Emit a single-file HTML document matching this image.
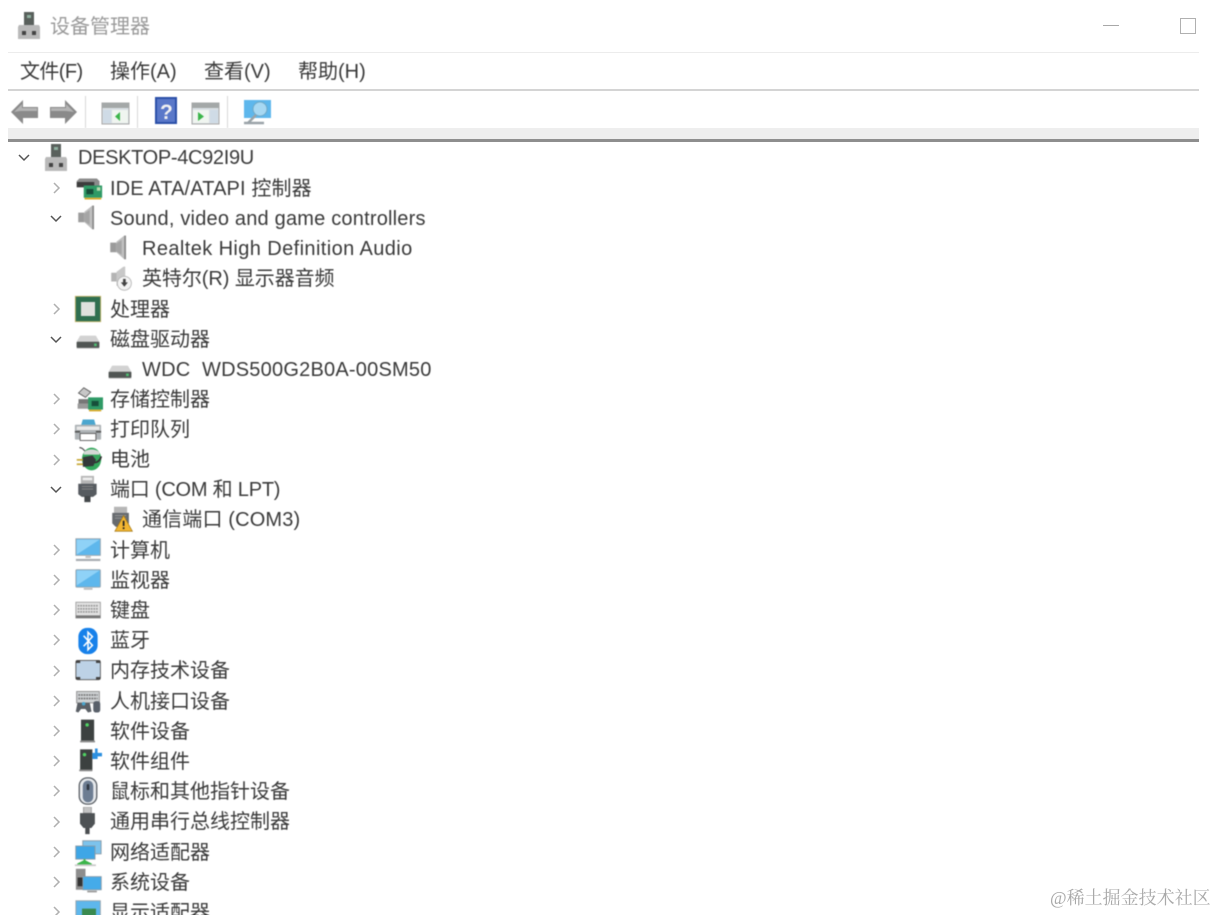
<!DOCTYPE html>
<html lang="zh-CN"><head><meta charset="utf-8"><title>设备管理器</title>
<style>
html,body{margin:0;padding:0;background:#fff;width:1216px;height:915px;overflow:hidden}
body{position:relative;font-family:"Liberation Sans","Noto Sans CJK SC",sans-serif;color:#3a3a3a}
.t{position:absolute;font-size:20px;line-height:28px;height:28px;white-space:nowrap;filter:blur(.4px)}
.i{position:absolute;width:28px;height:28px;filter:blur(.5px)}
.l{position:absolute}
</style></head><body>
<svg width="0" height="0" style="position:absolute">
<defs>
<symbol id="pc" viewBox="0 0 32 32"><rect x="11" y="2" width="10" height="15" fill="#59605c"/><rect x="14" y="5" width="4" height="3" fill="#8fb0a0"/><path d="M6 15h20l1 2v12H5V17z" fill="#b9b9b9"/><rect x="9" y="21" width="4" height="4" fill="#444"/><rect x="19" y="21" width="4" height="4" fill="#444"/></symbol>
<symbol id="ide" viewBox="0 0 32 32"><path d="M2 7l3-3h20l3 3v7H2z" fill="#8b8b8b"/><rect x="2" y="8" width="20" height="6" fill="#3c3c3c"/><rect x="10" y="12" width="21" height="14" fill="#2f9a66"/><rect x="13" y="16" width="8" height="6" fill="#174f3a"/><rect x="25" y="14" width="4" height="4" fill="#b5dcae"/><rect x="11" y="26" width="19" height="2" fill="#d8a926"/></symbol>
<symbol id="spk" viewBox="0 0 32 32"><rect x="6" y="11" width="7" height="11" fill="#9b9b9b"/><path d="M13 10l9-7h2v27h-2l-9-8z" fill="#c0c0c0"/><path d="M22 3h2v27h-2z" fill="#8a8a8a"/><path d="M13 12l6-4v17l-6-4z" fill="#a5a5a5"/></symbol>
<symbol id="spkd" viewBox="0 0 32 32"><rect x="6" y="10" width="6" height="10" fill="#b4b4b4"/><path d="M12 9l8-6h2v22H12z" fill="#c8c8c8"/><circle cx="21" cy="22" r="8" fill="#f4f4f4" stroke="#b5b5b5"/><path d="M19.500 17h3v4h2.500l-4 5-4-5h2.500z" fill="#444"/></symbol>
<symbol id="cpu" viewBox="0 0 32 32"><rect x="1" y="1" width="30" height="30" fill="#c9b66b"/><rect x="2" y="2" width="28" height="28" fill="#2f6f50"/><rect x="8" y="8" width="16" height="16" fill="#dfe1de"/></symbol>
<symbol id="hdd" viewBox="0 0 32 32"><path d="M7 11h18l4 7v8H3v-8z" fill="#d2d2d2"/><rect x="3" y="18" width="26" height="7" rx="1" fill="#505553"/><rect x="23" y="20" width="3" height="3" fill="#4fbf73"/></symbol>
<symbol id="sto" viewBox="0 0 32 32"><path d="M10 2l8 5-6 6-8-5z" fill="#c7c7c7" stroke="#555"/><rect x="4" y="15" width="12" height="5" fill="#777"/><rect x="3" y="20" width="18" height="6" fill="#9a9a9a"/><rect x="15" y="13" width="17" height="14" fill="#2f9a66"/><rect x="19" y="17" width="8" height="6" fill="#174f3a"/><rect x="16" y="27" width="14" height="2" fill="#d8a926"/></symbol>
<symbol id="prn" viewBox="0 0 32 32"><path d="M10 4h13l2 7H8z" fill="#4aa6cf"/><rect x="1" y="10" width="30" height="17" rx="1" fill="#aeb3b6"/><rect x="3" y="12" width="26" height="4" fill="#e8e8e8"/><rect x="7" y="20" width="18" height="8" fill="#fff" stroke="#555"/><rect x="1" y="17" width="6" height="2" fill="#555"/><rect x="25" y="17" width="6" height="2" fill="#555"/></symbol>
<symbol id="bat" viewBox="0 0 32 32"><path d="M5 3c6 0 4 5 9 4" fill="none" stroke="#555" stroke-width="1.500"/><ellipse cx="19" cy="16" rx="11" ry="13" fill="#34a85c"/><path d="M10 8q9-6 18 0v3H10z" fill="#d4d8d5"/><path d="M2 17h9M2 22h9" stroke="#c8a93a" stroke-width="2"/><path d="M9 14l11-2 4 5-3 7-12 1z" fill="#33393a"/><path d="M22 20q6 0 8-7" stroke="#333" stroke-width="2" fill="none"/></symbol>
<symbol id="port" viewBox="0 0 32 32"><rect x="9" y="1" width="15" height="10" fill="#b6b6b6"/><rect x="11" y="3" width="11" height="3" fill="#eee"/><path d="M6 10h21v12l-4 3H10l-4-3z" fill="#565b60"/><rect x="13" y="24" width="7" height="7" fill="#43474a"/><path d="M10 13h13M10 16h13" stroke="#888"/></symbol>
<symbol id="portw" viewBox="0 0 32 32"><rect x="8" y="2" width="15" height="8" fill="#b6b6b6"/><path d="M6 9h19v12l-4 4H10l-4-4z" fill="#666a6e"/><path d="M9 12h13M9 15h13" stroke="#999"/><path d="M19 12l10 18H9z" fill="#f2b632" stroke="#a17412" stroke-width=".8"/><rect x="18" y="18" width="2" height="6" fill="#222"/><rect x="18" y="25.500" width="2" height="2" fill="#222"/></symbol>
<symbol id="comp" viewBox="0 0 32 32"><rect x="1" y="2" width="28" height="19" fill="#5eb7ec" stroke="#9aa3aa"/><path d="M2 3h26L2 20z" fill="#8fd2f7"/><rect x="12" y="21" width="6" height="3" fill="#c3c3c3"/><rect x="1" y="25" width="28" height="2.500" fill="#a7adb1"/></symbol>
<symbol id="mon" viewBox="0 0 32 32"><rect x="1" y="3" width="28" height="20" rx="1" fill="#5eb7ec" stroke="#9aa3aa"/><path d="M2 4h26L2 21z" fill="#8fd2f7"/><rect x="10" y="24" width="10" height="2" fill="#bbb"/></symbol>
<symbol id="kbd" viewBox="0 0 32 32"><rect x="1" y="6" width="28" height="18" fill="#e3e3e3" stroke="#9b9b9b"/><path d="M3 10h24M3 13.500h24M3 17h24" stroke="#999" stroke-dasharray="2 1" stroke-width="2"/><rect x="1" y="21" width="28" height="3" fill="#777"/></symbol>
<symbol id="bt" viewBox="0 0 32 32"><rect x="5" y="1" width="22" height="30" rx="10" fill="#1781ea"/><path d="M11 10l10 11-5 5V6l5 5-10 11" fill="none" stroke="#fff" stroke-width="1.800"/></symbol>
<symbol id="mem" viewBox="0 0 32 32"><rect x="1" y="5" width="28" height="22" rx="2" fill="#bdd2e6" stroke="#555"/><path d="M1 5h5v3H1zM24 5h5v3h-5zM1 24h5v3H1zM24 24h5v3h-5z" fill="#444"/></symbol>
<symbol id="hid" viewBox="0 0 32 32"><rect x="3" y="4" width="26" height="13" fill="#cfd2d4" stroke="#8a8a8a"/><path d="M5 8h22M5 12h22" stroke="#777" stroke-dasharray="2 1" stroke-width="2"/><path d="M2 27l2-10h14l2 10-4 1-3-4H8l-3 4z" fill="#5b6066"/><rect x="22" y="15" width="8" height="13" rx="3" fill="#59606a"/><circle cx="11" cy="18" r="2" fill="#4aa6cf"/></symbol>
<symbol id="soft" viewBox="0 0 32 32"><rect x="8" y="3" width="15" height="24" fill="#3c4140"/><circle cx="15" cy="9" r="2" fill="#4fd262"/><rect x="7" y="27" width="17" height="2" fill="#888"/></symbol>
<symbol id="softc" viewBox="0 0 32 32"><rect x="7" y="5" width="14" height="24" fill="#3c4140"/><circle cx="12" cy="11" r="2" fill="#4fd262"/><rect x="6" y="28" width="15" height="2" fill="#888"/><path d="M21 9h3V4h3v5h5v4h-5v3h-6z" fill="#2b8fe0"/></symbol>
<symbol id="mouse" viewBox="0 0 32 32"><rect x="6" y="1" width="20" height="30" rx="9" fill="#e6e9ec" stroke="#5b6066" stroke-width="1.500"/><rect x="10" y="4" width="12" height="25" rx="6" fill="#6d7d92"/><rect x="14.500" y="8" width="3" height="7" rx="1.500" fill="#2e3640"/></symbol>
<symbol id="usb" viewBox="0 0 32 32"><rect x="12" y="0" width="9" height="7" fill="#c4c4c4" stroke="#999"/><path d="M8 7h17v12l-4 5h-9l-4-5z" fill="#4e5255"/><rect x="14" y="24" width="5" height="7" fill="#4a4d50"/></symbol>
<symbol id="net" viewBox="0 0 32 32"><rect x="10" y="2" width="21" height="15" fill="#7cc3ec" stroke="#8a9aa6"/><rect x="2" y="8" width="22" height="15" fill="#3ea6e6" stroke="#8a9aa6"/><path d="M12 23v4M4 29l8-4 8 4z" stroke="#3bb54a" fill="#3bb54a" stroke-width="2"/><rect x="1" y="29" width="24" height="2" fill="#c9c9c9"/></symbol>
<symbol id="sys" viewBox="0 0 32 32"><rect x="1" y="2" width="11" height="24" fill="#8d8d8d"/><rect x="3" y="12" width="7" height="10" fill="#333"/><rect x="9" y="11" width="21" height="15" fill="#45abe9" stroke="#8a9aa6"/><rect x="14" y="27" width="11" height="2" fill="#999"/></symbol>
<symbol id="disp" viewBox="0 0 32 32"><rect x="1" y="2" width="28" height="22" fill="#5eb7ec" stroke="#9aa3aa"/><rect x="8" y="11" width="16" height="8" fill="#3a8a4f"/></symbol>
</defs></svg>

<!-- title bar -->
<svg class="i" style="left:13px;top:10px;width:32px;height:32px"><use href="#pc"/></svg>
<div class="t" style="left:50px;top:13px;color:#9a9a9a">设备管理器</div>
<div class="l" style="left:1103px;top:25px;width:16px;height:1px;background:#a8a8a8"></div>
<div class="l" style="left:1180px;top:18px;width:14px;height:14px;border:1.500px solid #b0b0b0"></div>
<div class="l" style="left:8px;top:52px;width:1191px;height:1px;background:#ececec"></div>

<!-- menu -->
<div class="t" style="left:20px;top:58px;letter-spacing:-.6px">文件(F)</div>
<div class="t" style="left:110px;top:58px">操作(A)</div>
<div class="t" style="left:204px;top:58px">查看(V)</div>
<div class="t" style="left:298px;top:58px">帮助(H)</div>
<div class="l" style="left:8px;top:88.500px;width:1191px;height:2.500px;background:#d4d4d4"></div>

<!-- toolbar -->
<svg class="l" style="left:8px;top:96px;filter:blur(.6px)" width="270" height="32" viewBox="0 0 270 32">
<path d="M3 16L15 4v7h15v11H15v6z" fill="#8a8a8a"/><path d="M6 16l8-8v4h15v3H12z" fill="#b4b4b4"/>
<path d="M69 16L57 4v7H42v11h15v6z" fill="#8a8a8a"/><path d="M66 16l-8-8v4H43v3h15z" fill="#b4b4b4"/>
<rect x="77" y="-2" width="1" height="34" fill="#d8d8d8"/>
<rect x="94" y="7" width="27" height="21" fill="#d9dfe4" stroke="#a8a8a8"/><rect x="94" y="7" width="27" height="5" fill="#a4a8a8"/><rect x="95" y="14" width="8" height="13" fill="#cfdbe6"/><rect x="104" y="14" width="16" height="13" fill="#f0f5f0"/><path d="M112 16v9l-5-4.500z" fill="#3bb54a"/>
<rect x="129" y="-2" width="1" height="34" fill="#d8d8d8"/>
<rect x="147" y="1" width="22" height="27" fill="#2b4fa8"/><rect x="149" y="3" width="18" height="23" fill="#5a78c9"/><text x="152" y="23" font-family="Liberation Sans,sans-serif" font-size="21" font-weight="bold" fill="#f1f1f1">?</text>
<rect x="184" y="7" width="27" height="21" fill="#d9dfe4" stroke="#a8a8a8"/><rect x="184" y="7" width="27" height="5" fill="#a4a8a8"/><rect x="185" y="14" width="16" height="13" fill="#f0f5f0"/><rect x="202" y="14" width="8" height="13" fill="#cfdbe6"/><path d="M190 16v9l6-4.500z" fill="#3bb54a"/>
<rect x="219" y="-2" width="1" height="34" fill="#d8d8d8"/>
<rect x="236" y="4" width="27" height="18" fill="#5eb7ec"/><circle cx="252" cy="13" r="7" fill="#a7d8f2" stroke="#6fa9c7"/><path d="M248 19l-8 8M236 27h20" stroke="#9aa3a8" stroke-width="2.500"/>
</svg>
<div class="l" style="left:8px;top:128px;width:1191px;height:11px;background:#eeeeee"></div>
<div class="l" style="left:8px;top:139px;width:1191px;height:3px;background:#8e8e8e"></div>

<!-- tree: chevrons -->
<svg class="l" style="left:0;top:0" width="70" height="915" fill="none" stroke-width="1.500">
<g stroke="#555"><path d="M19 155l5 5 5-5"/><path d="M51 216l5 5 5-5"/><path d="M51 337l5 5 5-5"/><path d="M51 487l5 5 5-5"/></g>
<g stroke="#b0b0b0">
<path d="M54 183l5 5-5 5"/><path d="M54 304l5 5-5 5"/><path d="M54 394l5 5-5 5"/><path d="M54 424l5 5-5 5"/><path d="M54 455l5 5-5 5"/><path d="M54 545l5 5-5 5"/><path d="M54 575l5 5-5 5"/><path d="M54 605l5 5-5 5"/><path d="M54 635l5 5-5 5"/><path d="M54 666l5 5-5 5"/><path d="M54 696l5 5-5 5"/><path d="M54 726l5 5-5 5"/><path d="M54 756l5 5-5 5"/><path d="M54 786l5 5-5 5"/><path d="M54 817l5 5-5 5"/><path d="M54 847l5 5-5 5"/><path d="M54 877l5 5-5 5"/><path d="M54 907l5 5-5 5"/>
</g></svg>

<!-- icons -->
<svg class="i" style="left:40px;top:142px;width:32px;height:32px"><use href="#pc"/></svg>
<svg class="i" style="left:75px;top:175px"><use href="#ide"/></svg>
<svg class="i" style="left:73px;top:203px"><use href="#spk"/></svg>
<svg class="i" style="left:105px;top:233px"><use href="#spk"/></svg>
<svg class="i" style="left:106px;top:264px"><use href="#spkd"/></svg>
<svg class="i" style="left:74px;top:295px"><use href="#cpu"/></svg>
<svg class="i" style="left:74px;top:326px"><use href="#hdd"/></svg>
<svg class="i" style="left:106px;top:356px"><use href="#hdd"/></svg>
<svg class="i" style="left:75px;top:386px"><use href="#sto"/></svg>
<svg class="i" style="left:74px;top:416px"><use href="#prn"/></svg>
<svg class="i" style="left:75px;top:445px"><use href="#bat"/></svg>
<svg class="i" style="left:73px;top:475px"><use href="#port"/></svg>
<svg class="i" style="left:107px;top:505px"><use href="#portw"/></svg>
<svg class="i" style="left:75px;top:537px"><use href="#comp"/></svg>
<svg class="i" style="left:75px;top:567px"><use href="#mon"/></svg>
<svg class="i" style="left:75px;top:597px"><use href="#kbd"/></svg>
<svg class="i" style="left:74px;top:627px"><use href="#bt"/></svg>
<svg class="i" style="left:75px;top:656px"><use href="#mem"/></svg>
<svg class="i" style="left:74px;top:688px"><use href="#hid"/></svg>
<svg class="i" style="left:74px;top:717px"><use href="#soft"/></svg>
<svg class="i" style="left:74px;top:745px"><use href="#softc"/></svg>
<svg class="i" style="left:74px;top:777px"><use href="#mouse"/></svg>
<svg class="i" style="left:73px;top:807px"><use href="#usb"/></svg>
<svg class="i" style="left:74px;top:839px"><use href="#net"/></svg>
<svg class="i" style="left:75px;top:867px"><use href="#sys"/></svg>
<svg class="i" style="left:75px;top:899px"><use href="#disp"/></svg>

<!-- labels -->
<div class="t" style="left:78px;top:144px;letter-spacing:-.33px">DESKTOP-4C92I9U</div>
<div class="t" style="left:110px;top:175px;letter-spacing:.12px">IDE ATA/ATAPI 控制器</div>
<div class="t" style="left:110px;top:205px;letter-spacing:.2px">Sound, video and game controllers</div>
<div class="t" style="left:142px;top:235px;letter-spacing:.4px">Realtek High Definition Audio</div>
<div class="t" style="left:142px;top:265px;letter-spacing:-.07px">英特尔(R) 显示器音频</div>
<div class="t" style="left:110px;top:296px">处理器</div>
<div class="t" style="left:110px;top:326px">磁盘驱动器</div>
<div class="t" style="left:142px;top:356px;white-space:pre;letter-spacing:.22px">WDC  WDS500G2B0A-00SM50</div>
<div class="t" style="left:110px;top:386px">存储控制器</div>
<div class="t" style="left:110px;top:416px">打印队列</div>
<div class="t" style="left:110px;top:446px">电池</div>
<div class="t" style="left:110px;top:476px;letter-spacing:-.22px">端口 (COM 和 LPT)</div>
<div class="t" style="left:142px;top:506px;letter-spacing:.15px">通信端口 (COM3)</div>
<div class="t" style="left:110px;top:537px">计算机</div>
<div class="t" style="left:110px;top:567px">监视器</div>
<div class="t" style="left:110px;top:597px">键盘</div>
<div class="t" style="left:110px;top:627px">蓝牙</div>
<div class="t" style="left:110px;top:657px">内存技术设备</div>
<div class="t" style="left:110px;top:688px">人机接口设备</div>
<div class="t" style="left:110px;top:718px">软件设备</div>
<div class="t" style="left:110px;top:748px">软件组件</div>
<div class="t" style="left:110px;top:778px">鼠标和其他指针设备</div>
<div class="t" style="left:110px;top:808px">通用串行总线控制器</div>
<div class="t" style="left:110px;top:839px">网络适配器</div>
<div class="t" style="left:110px;top:869px">系统设备</div>
<div class="t" style="left:110px;top:899px">显示适配器</div>

<div class="t" style="left:1050px;top:884px;font-size:18px;color:#a9a9a9;font-family:'Liberation Serif','Noto Serif CJK SC',serif;filter:none">@稀土掘金技术社区</div>
</body></html>
